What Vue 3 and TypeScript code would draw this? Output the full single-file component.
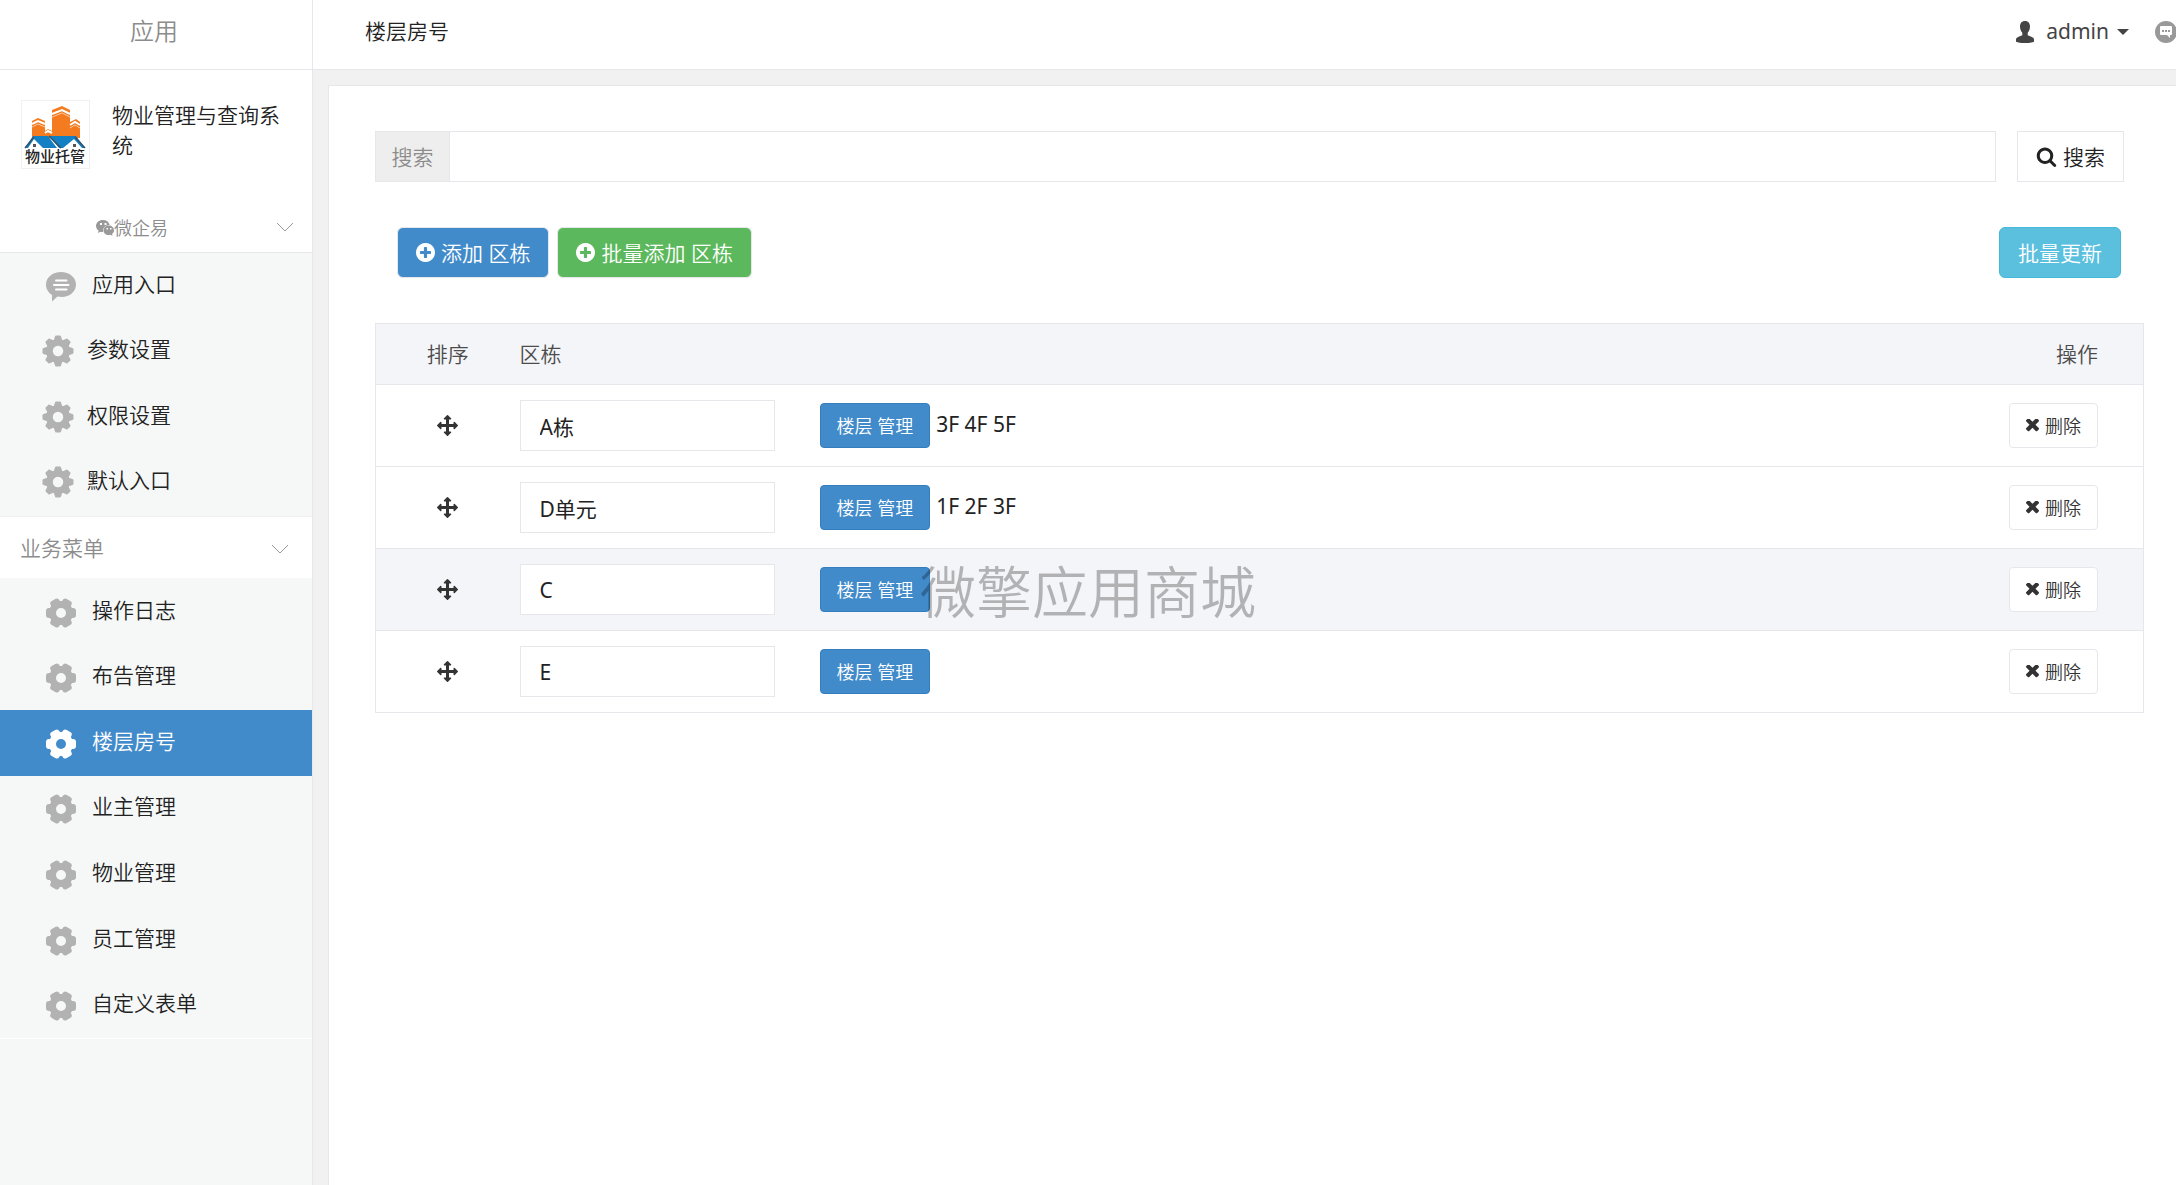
<script setup lang="ts">
import { ref } from 'vue'

interface MenuItem {
  label: string
  icon: 'chat' | 'cog' | 'nut'
  active?: boolean
}

interface Building {
  name: string
  floors: string
  hovered?: boolean
}

const appMenu: MenuItem[] = [
  { label: '应用入口', icon: 'chat' },
  { label: '参数设置', icon: 'cog' },
  { label: '权限设置', icon: 'cog' },
  { label: '默认入口', icon: 'cog' },
]

const businessMenu: MenuItem[] = [
  { label: '操作日志', icon: 'nut' },
  { label: '布告管理', icon: 'nut' },
  { label: '楼层房号', icon: 'nut', active: true },
  { label: '业主管理', icon: 'nut' },
  { label: '物业管理', icon: 'nut' },
  { label: '员工管理', icon: 'nut' },
  { label: '自定义表单', icon: 'nut' },
]

const buildings = ref<Building[]>([
  { name: 'A栋', floors: '3F 4F 5F' },
  { name: 'D单元', floors: '1F 2F 3F' },
  { name: 'C', floors: '', hovered: true },
  { name: 'E', floors: '' },
])

const keyword = ref('')

const cogAngles = [0, 45, 90, 135, 180, 225, 270, 315]
const nutAngles = [30, 90, 150, 210, 270, 330]

function removeBuilding(index: number): void {
  buildings.value.splice(index, 1)
}
</script>

<template>
  <div class="page">
    <aside class="sidebar">
      <div class="sidebar-title">应用</div>
      <div class="app-info">
        <svg class="logo" viewBox="0 0 67 67" role="img" aria-label="物业托管">
          <path fill="#f47b20" d="M10 20l6-3 7 3v16H10zM30 9l10-4 8 4v28H30zM48 21l6-3 4 3v16H48zM23 30l3-2 4 2v7h-7z" />
          <path fill="none" stroke="#fff" stroke-width="2" d="M10 23l6-3 7 3M30 13l10-4 8 4M48 24l5-3 5 3M23 32l3-2 4 2" />
          <path fill="none" stroke="#f9c9a2" stroke-width="1" d="M10 26l6-3 7 3M30 16l10-4 8 4M48 27l5-3 5 3" />
          <path fill="#1380c4" d="M11 35h15l9 12H21l-9-9-6 9H3zM27 35h27l9 12h-3l-8-9-11 9h-4z" />
          <path fill="none" stroke="#35536b" stroke-width="1.500" d="M3 47l9-11M27 35l12 12M53 36l10 11" />
          <path fill="#555" d="M11 43h3v3h-3zM51 43h3v3h-3z" />
          <text x="33" y="61" text-anchor="middle" class="logo-text">物业托管</text>
        </svg>
        <h1 class="app-name">物业管理与查询系统</h1>
      </div>
      <button type="button" class="account">
        <span class="account-name">
          <svg class="wechat" viewBox="0 0 18 16" aria-hidden="true">
            <path fill="#999" d="M7 0C3 0 0 2.600 0 6c0 1.900 1 3.500 2.600 4.600L2 13l2.500-1.300c.8.2 1.500.3 2.500.3C6.600 8 9 5 13.700 4.900 13 2 10.300 0 7 0z" />
            <path fill="#999" d="M18 10.300c0-2.700-2.400-4.800-5.200-4.800-3 0-5.300 2.100-5.300 4.800s2.300 4.800 5.300 4.800c.6 0 1.200-.1 1.700-.3l2 1.100-.5-1.800c1.200-.9 2-2.200 2-3.800z" />
            <path fill="#fff" d="M4 3h2v2H4zM8.500 3h2v2h-2zM10.500 8h1.500v1.500h-1.500zM14 8h1.500v1.500H14z" />
          </svg>
          <span>微企易</span>
        </span>
        <svg class="chevron" viewBox="0 0 18 12" aria-hidden="true"><path d="M1 1l8 8 8-8" /></svg>
      </button>

      <nav class="menu-group app-group">
        <a
          v-for="item in appMenu"
          :key="item.label"
          href="#"
          class="menu-item"
          :class="{ tight: item.icon === 'cog' }"
        >
          <svg v-if="item.icon === 'chat'" class="menu-icon" viewBox="-16 -16 32 32" aria-hidden="true">
            <path fill="currentColor" d="M0-14c8.500 0 15 5.500 15 12.500S8.500 11 1 11c-1.500 0-3 0-4.500-.4L-9 15.500V9c-3.700-2.300-6-6-6-10.500C-15-8.500-8.500-14 0-14z" />
            <path stroke="#fff" stroke-width="2" stroke-linecap="round" d="M-5-5.500H5.500M-7-1H7.500M-5 3.500H5.500" />
          </svg>
          <svg v-else class="menu-icon" viewBox="-16 -16 32 32" aria-hidden="true">
            <circle r="8.500" fill="none" stroke="currentColor" stroke-width="6.500" />
            <path
              v-for="angle in cogAngles"
              :key="angle"
              :transform="`rotate(${angle})`"
              fill="currentColor"
              d="M-4.500-10L-3-14.500q.3-1 1-1h4q.7 0 1 1L4.500-10z"
            />
          </svg>
          <span>{{ item.label }}</span>
        </a>
      </nav>

      <button type="button" class="group-head">
        <span>业务菜单</span>
        <svg class="chevron" viewBox="0 0 18 12" aria-hidden="true"><path d="M1 1l8 8 8-8" /></svg>
      </button>

      <nav class="menu-group business-group">
        <a
          v-for="item in businessMenu"
          :key="item.label"
          href="#"
          class="menu-item"
          :class="{ active: item.active }"
        >
          <svg class="menu-icon" viewBox="-16 -16 32 32" aria-hidden="true">
            <circle r="8.500" fill="none" stroke="currentColor" stroke-width="7" />
            <rect
              v-for="angle in nutAngles"
              :key="angle"
              :transform="`rotate(${angle})`"
              fill="currentColor"
              x="-5"
              y="-15"
              width="10"
              height="9"
              rx="3"
            />
          </svg>
          <span>{{ item.label }}</span>
        </a>
      </nav>
    </aside>

    <div class="main">
      <header class="topbar">
        <h2 class="page-title">楼层房号</h2>
        <div class="top-actions">
          <button type="button" class="user">
            <svg class="user-icon" viewBox="0 0 18 22" aria-hidden="true">
              <path fill="#444" d="M9 0c3.200 0 5 2.200 5 5.500 0 2.500-.9 5-2.300 6.300v2.400c2.600 1 5 1.800 6 3.100.4.800.3 2.200.3 3.200 0 .8-4 1.500-9 1.500s-9-.7-9-1.500c0-1-.1-2.400.3-3.200 1-1.300 3.400-2.100 6-3.100v-2.400C4.900 10.500 4 8 4 5.500 4 2.200 5.800 0 9 0z" />
            </svg>
            <span>admin</span>
            <svg class="caret" viewBox="0 0 12 6" aria-hidden="true"><path fill="#444" d="M0 0h12L6 6z" /></svg>
          </button>
          <button type="button" class="message" aria-label="消息">
            <svg viewBox="0 0 22 22" aria-hidden="true">
              <circle cx="11" cy="11" r="11" fill="#999" />
              <path fill="#fff" d="M6 5h10q1 0 1 1v7q0 1-1 1h-1v3l-3-3H6q-1 0-1-1V6q0-1 1-1z" />
              <path fill="#999" d="M7 9h2v2H7zM10 9h2v2h-2zM13 9h2v2h-2z" />
            </svg>
          </button>
        </div>
      </header>

      <main class="panel">
        <form class="search-row" @submit.prevent>
          <div class="search-group">
            <label for="keyword" class="search-label">搜索</label>
            <input id="keyword" v-model="keyword" type="text" class="search-input" />
          </div>
          <button type="submit" class="search-btn">
            <svg viewBox="0 0 1792 1792" aria-hidden="true">
              <path fill="currentColor" d="M1216 832q0-185-131.500-316.500t-316.500-131.500-316.500 131.500-131.500 316.500 131.500 316.500 316.500 131.500 316.500-131.500 131.500-316.500zm512 832q0 52-38 90t-90 38q-54 0-90-38l-343-342q-179 124-399 124-143 0-273.500-55.500t-225-150-150-225-55.500-273.500 55.500-273.500 150-225 225-150 273.500-55.500 273.500 55.500 225 150 150 225 55.500 273.500q0 220-124 399l343 343q37 37 37 90z" />
            </svg>
            <span>搜索</span>
          </button>
        </form>

        <div class="toolbar">
          <button v-for="(text, i) in ['添加 区栋', '批量添加 区栋']" :key="text" type="button" class="btn" :class="i === 0 ? 'btn-blue' : 'btn-green'">
            <svg viewBox="128 128 1536 1536" aria-hidden="true">
              <path fill="currentColor" d="M1344 960v-128q0-26-19-45t-45-19h-256v-256q0-26-19-45t-45-19h-128q-26 0-45 19t-19 45v256h-256q-26 0-45 19t-19 45v128q0 26 19 45t45 19h256v256q0 26 19 45t45 19h128q26 0 45-19t19-45v-256h256q26 0 45-19t19-45zm320-64q0 209-103 385.500t-279.500 279.500-385.500 103-385.500-103-279.500-279.500-103-385.500 103-385.500 279.500-279.500 385.500-103 385.500 103 279.500 279.500 103 385.500z" />
            </svg>
            <span>{{ text }}</span>
          </button>
          <button type="button" class="btn btn-info">批量更新</button>
        </div>

        <table class="list">
          <colgroup>
            <col class="col-sort" />
            <col class="col-name" />
            <col />
            <col class="col-action" />
          </colgroup>
          <thead>
            <tr>
              <th class="sort">排序</th>
              <th>区栋</th>
              <th></th>
              <th class="action">操作</th>
            </tr>
          </thead>
          <tbody>
            <tr v-for="(building, index) in buildings" :key="index" :class="{ hovered: building.hovered }">
              <td class="sort">
                <svg class="move" viewBox="0 0 1792 1792" aria-hidden="true">
                  <path fill="#333" d="M1792 896q0 26-19 45l-256 256q-19 19-45 19t-45-19-19-45v-128h-384v384h128q26 0 45 19t19 45-19 45l-256 256q-19 19-45 19t-45-19l-256-256q-19-19-19-45t19-45 45-19h128v-384h-384v128q0 26-19 45t-45 19-45-19l-256-256q-19-19-19-45t19-45l256-256q19-19 45-19t45 19 19 45v128h384v-384h-128q-26 0-45-19t-19-45 19-45l256-256q19-19 45-19t45 19l256 256q19 19 19 45t-19 45-45 19h-128v384h384v-128q0-26 19-45t45-19 45 19l256 256q19 19 19 45z" />
                </svg>
              </td>
              <td><input v-model="building.name" type="text" class="name-input" aria-label="区栋" /></td>
              <td>
                <div class="floors">
                  <button type="button" class="btn-small btn-manage">楼层 管理</button>
                  <span class="floor-list">{{ building.floors }}</span>
                </div>
              </td>
              <td class="action">
                <button type="button" class="btn-small btn-delete" @click="removeBuilding(index)">
                  <svg viewBox="302 430 1188 1188" aria-hidden="true">
                    <path fill="currentColor" d="M1490 1322q0 40-28 68l-136 136q-28 28-68 28t-68-28l-294-294-294 294q-28 28-68 28t-68-28l-136-136q-28-28-28-68t28-68l294-294-294-294q-28-28-28-68t28-68l136-136q28-28 68-28t68 28l294 294 294-294q28-28 68-28t68 28l136 136q28 28 28 68t-28 68l-294 294 294 294q28 28 28 68z" />
                  </svg>
                  <span>删除</span>
                </button>
              </td>
            </tr>
          </tbody>
        </table>
      </main>
    </div>

    <div class="watermark">微擎应用商城</div>
  </div>
</template>

<style>
html,
body {
  margin: 0;
  background: #f1f1f1;
}
</style>

<style scoped>
.page {
  display: flex;
  min-height: 100vh;
  overflow: hidden;
  font-family: "Noto Sans", "Noto Sans CJK SC", sans-serif;
  font-size: 21px;
  font-weight: 350;
  line-height: 30px;
  color: #222;
}

.page *,
.page {
  box-sizing: border-box;
}

button,
input {
  font: inherit;
  color: inherit;
}

button {
  padding: 0;
  border: 0;
  background: none;
  cursor: pointer;
}

svg {
  flex: none;
}

a {
  color: inherit;
  text-decoration: none;
}

h1,
h2 {
  margin: 0;
  font: inherit;
}

/* Sidebar */
.sidebar {
  display: flex;
  flex: none;
  flex-direction: column;
  width: 313px;
  border-right: 1px solid #e7e7eb;
  background: #f6f8f8;
}

.sidebar-title {
  height: 70px;
  padding-right: 4px;
  border-bottom: 1px solid #e7e7eb;
  background: #fff;
  font-size: 24px;
  line-height: 62px;
  text-align: center;
  color: #8c8c8c;
}

.app-info {
  display: flex;
  gap: 22px;
  height: 132px;
  padding: 30px 28px 0 21px;
  background: #fff;
}

.logo {
  width: 69px;
  height: 69px;
  border: 1px solid #f1f1f1;
}

.logo-text {
  font-size: 15px;
  font-weight: 500;
  fill: #222;
}

.account {
  display: flex;
  align-items: center;
  height: 51px;
  padding: 2px 18px 0 0;
  border-bottom: 1px solid #e7e7eb;
  background: #fff;
  font-size: 18px;
  color: #8c8c8c;
}

.account-name {
  display: flex;
  flex: 1;
  align-items: center;
  padding-left: 96px;
}

.wechat {
  width: 18px;
  height: 16px;
}

.chevron {
  width: 18px;
  height: 12px;
  fill: none;
  stroke: #999;
}

.menu-group {
  display: grid;
  grid-auto-rows: 1fr;
}

.app-group {
  height: 264px;
  padding-bottom: 1px;
  border-bottom: 1px solid #f1f1f1;
}

.business-group {
  height: 461px;
  padding-top: 1px;
  border-bottom: 1px solid #fff;
}

.menu-item {
  display: flex;
  align-items: center;
  gap: 15px;
  padding-left: 45px;
}

.menu-item.tight {
  gap: 13px;
  padding-left: 42px;
}

.menu-item span {
  padding-bottom: 4px;
}

.menu-item.active {
  background: #428bca;
  color: #fff;
}

.menu-icon {
  width: 32px;
  height: 32px;
  color: #b2b2b2;
}

.business-group .menu-icon {
  margin-top: 2px;
}

.active .menu-icon {
  color: #fff;
}

.group-head {
  display: flex;
  align-items: center;
  justify-content: space-between;
  height: 61px;
  padding: 0 23px 0 20px;
  background: #fff;
  color: #8c8c8c;
}

.group-head .chevron {
  margin-top: 4px;
}

/* Main area */
.main {
  display: flex;
  flex: 1;
  flex-direction: column;
  min-width: 0;
}

.topbar {
  display: flex;
  justify-content: space-between;
  height: 70px;
  border-bottom: 1px solid #e7e7eb;
  background: #fff;
}

.page-title {
  padding-left: 52px;
  line-height: 62px;
}

.top-actions {
  display: flex;
  height: 64px;
  margin-right: -1px;
}

.user {
  display: flex;
  align-items: center;
  margin-right: 26px;
  font-weight: 400;
  color: #444;
}

.user span {
  padding-bottom: 2px;
}

.user-icon {
  width: 18px;
  height: 22px;
  margin-right: 12px;
}

.caret {
  width: 12px;
  height: 6px;
  margin-left: 8px;
}

.message svg {
  display: block;
  width: 22px;
  height: 22px;
}

.panel {
  flex: 1;
  margin: 15px 0 0 15px;
  padding: 45px 32px 0 46px;
  border: solid #e7e7eb;
  border-width: 1px 0 0 1px;
  background: #fff;
}

.search-row {
  display: flex;
  gap: 21px;
  padding-right: 20px;
}

.search-group {
  display: flex;
  flex: 1;
  height: 51px;
  border: 1px solid #e7e7eb;
}

.search-label {
  width: 74px;
  border-right: 1px solid #e7e7eb;
  background: #eee;
  line-height: 50px;
  text-align: center;
  color: #8c8c8c;
}

.search-input {
  flex: 1;
  min-width: 0;
  padding: 0 18px;
  border: 0;
  background: #fff;
  outline: none;
}

.search-btn {
  display: flex;
  align-items: center;
  justify-content: center;
  gap: 6px;
  width: 107px;
  height: 51px;
  border: 1px solid #e7e7eb;
  background: #fff;
}

.search-btn svg {
  width: 21px;
  height: 21px;
}

.toolbar {
  display: flex;
  gap: 8px;
  padding: 45px 23px 45px 22px;
}

.btn {
  display: flex;
  align-items: center;
  gap: 6px;
  height: 51px;
  padding: 0 18px;
  border: 1px solid #e7e7eb;
  border-radius: 6px;
  color: #fff;
}

.btn svg {
  width: 19px;
  height: 19px;
}

.btn-blue {
  background: #428bca;
}

.btn-green {
  background: #5cb85c;
}

.btn-info {
  margin-left: auto;
  border-color: #46b8da;
  background: #5bc0de;
}

.list {
  width: 100%;
  border: 1px solid #e7e7eb;
  border-collapse: collapse;
  table-layout: fixed;
}

.col-sort {
  width: 144px;
}

.col-name {
  width: 300px;
}

.col-action {
  width: 160px;
}

th {
  height: 61px;
  padding: 0;
  background: #f4f5f9;
  font-weight: 350;
  text-align: left;
  color: #4c4c4c;
}

td {
  height: 82px;
  padding: 0;
  border-top: 1px solid #e7e7eb;
}

.hovered td {
  background: #f4f5f9;
}

.sort {
  text-align: center;
}

.action {
  padding-right: 45px;
  text-align: right;
}

.move {
  display: block;
  width: 21px;
  height: 21px;
  margin: 0 auto;
}

.name-input {
  display: block;
  width: 255px;
  height: 51px;
  padding: 0 19px;
  border: 1px solid #e7e7eb;
  background: #fff;
  font-weight: 400;
  outline: none;
}

.floors {
  display: flex;
  align-items: center;
  gap: 6px;
}

.floor-list {
  padding-bottom: 4px;
  font-weight: 400;
}

.btn-small {
  height: 45px;
  padding: 0 16px;
  border: 1px solid #e7e7eb;
  border-radius: 4px;
  font-size: 18px;
}

.btn-manage {
  border-color: #357ebd;
  background: #428bca;
  color: #fff;
}

.btn-delete {
  display: inline-flex;
  align-items: center;
  gap: 6px;
  background: #fff;
  color: #333;
  vertical-align: middle;
}

.btn-delete svg {
  width: 13px;
  height: 13px;
}

.watermark {
  position: fixed;
  top: 50%;
  left: 50%;
  padding-bottom: 4px;
  font-size: 56px;
  line-height: 64px;
  white-space: nowrap;
  color: rgba(0, 0, 0, 0.27);
  transform: translate(-50%, -50%);
  pointer-events: none;
}
</style>
